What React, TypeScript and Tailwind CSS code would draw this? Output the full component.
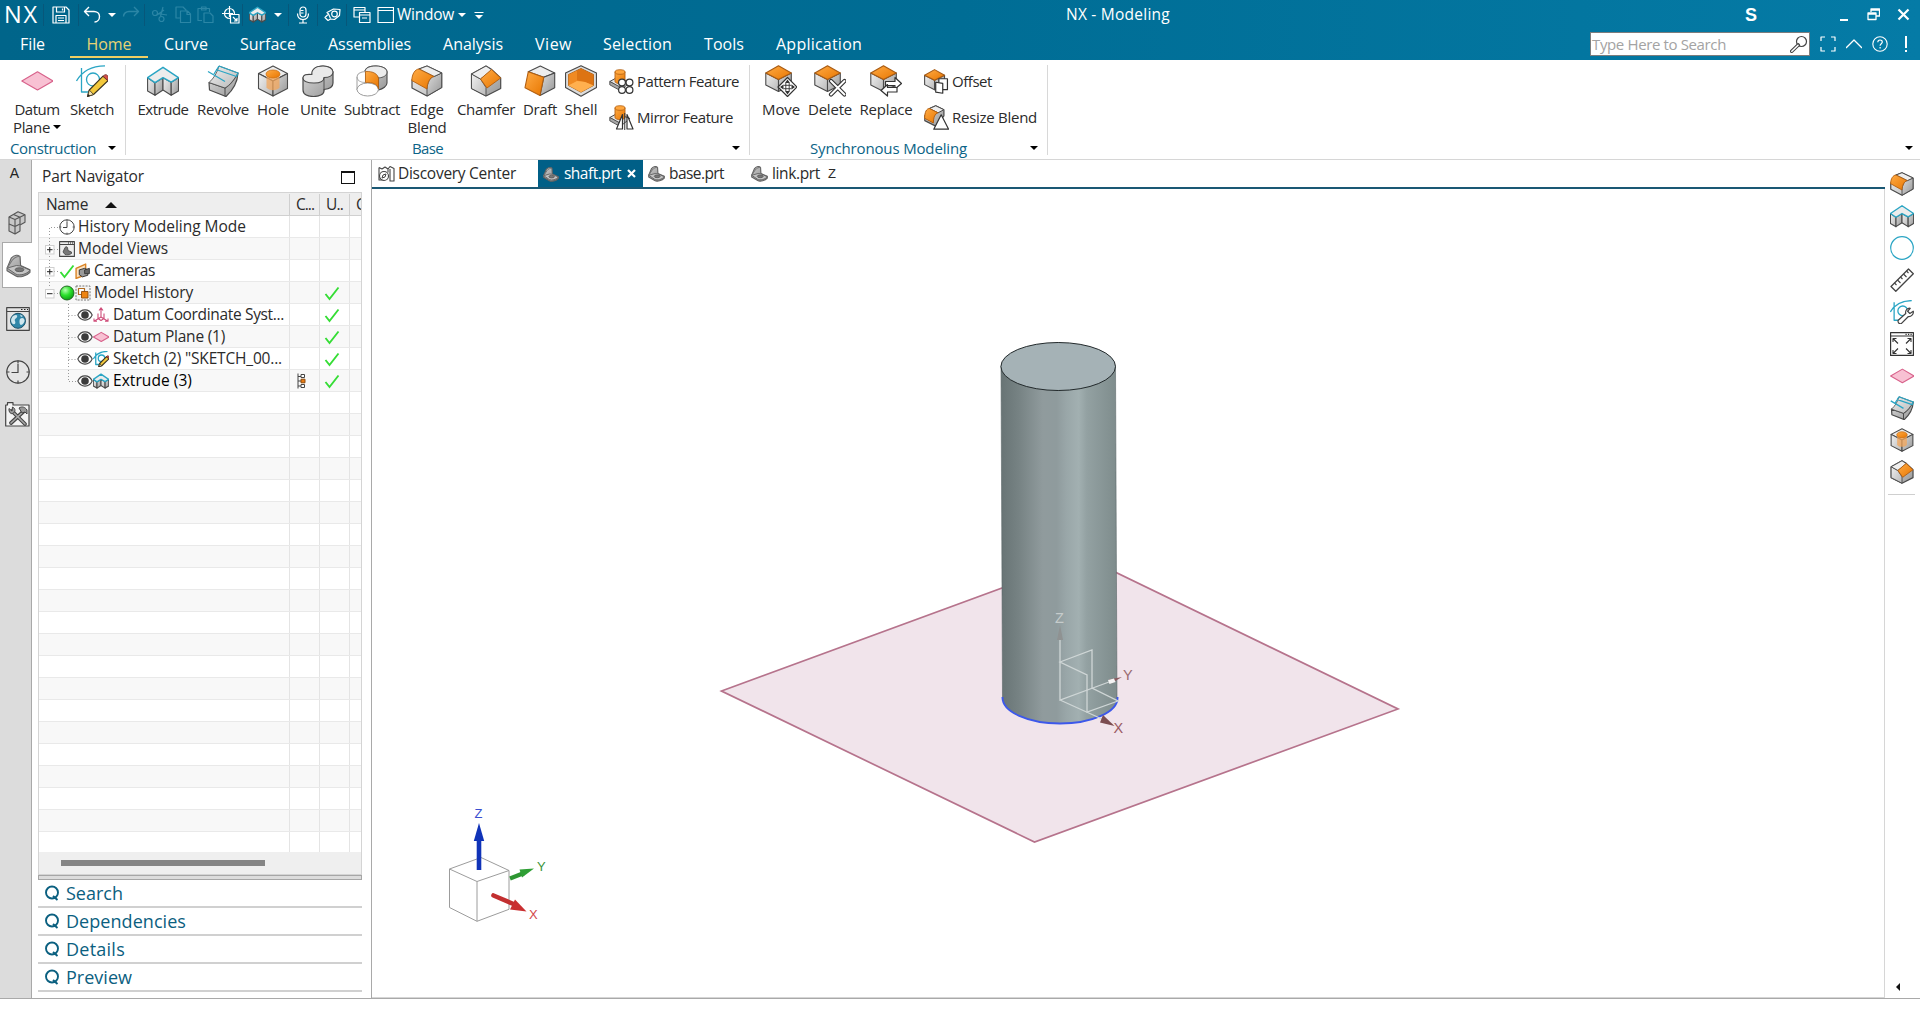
import { useLayoutEffect, useRef, useState, type ReactNode } from "react";
import clsx from "clsx";

/* Text set to a given width: the tracking is worked out from the measured width. */
function Fit({ w, children, className }: { w: number; children: string; className?: string }) {
  const ref = useRef<HTMLSpanElement>(null);
  const [ls, setLs] = useState(0);
  useLayoutEffect(() => {
    const natural = ref.current!.getBoundingClientRect().width;
    setLs((w - natural) / children.length);
  }, [w, children]);
  return (
    <span ref={ref} className={clsx("inline-block whitespace-pre", className)} style={{ letterSpacing: `${ls}px` }}>
      {children}
    </span>
  );
}

/* Icons drawn below their nominal size keep their stroke widths in screen pixels. */
function Svg({ s = 32, vb = 32, children, className }: { s?: number; vb?: number; children: ReactNode; className?: string }) {
  return (
    <svg
      width={s}
      height={s}
      viewBox={`0 0 ${vb} ${vb}`}
      fill="none"
      strokeLinejoin="round"
      className={clsx("shrink-0", s < vb && "[&_*]:[vector-effect:non-scaling-stroke]", className)}
    >
      {children}
    </svg>
  );
}

function Caret({ className }: { className?: string }) {
  return (
    <svg width="8" height="4" viewBox="0 0 8 4" className={clsx("shrink-0", className)}>
      <path d="M0 0h8L4 4z" fill="currentColor" />
    </svg>
  );
}

function Defs() {
  return (
    <svg width="0" height="0" className="absolute">
      <defs>
        <linearGradient id="gSide" x1="0" y1="0" x2="1" y2="1">
          <stop offset="0" stopColor="#f0f0f0" />
          <stop offset="1" stopColor="#b9b9b9" />
        </linearGradient>
        <linearGradient id="gDark" x1="0" y1="0" x2="1" y2="1">
          <stop offset="0" stopColor="#dcdcdc" />
          <stop offset="1" stopColor="#969696" />
        </linearGradient>
        <linearGradient id="gOr" x1="0" y1="0" x2="1" y2="1">
          <stop offset="0" stopColor="#ffab45" />
          <stop offset="1" stopColor="#e87600" />
        </linearGradient>
        <linearGradient id="gPart" x1="0" y1="0" x2="1" y2="1">
          <stop offset="0" stopColor="#c9c9c9" />
          <stop offset="1" stopColor="#888888" />
        </linearGradient>
        <radialGradient id="gBall" cx="0.38" cy="0.3" r="0.75">
          <stop offset="0" stopColor="#b6ffb0" />
          <stop offset="0.5" stopColor="#2be02b" />
          <stop offset="1" stopColor="#0c9a12" />
        </radialGradient>
      </defs>
    </svg>
  );
}

const INK = "#4a4a4a";
const CY = "#2aa5c4";

type IP = { s?: number; className?: string };

function HexBase() {
  return (
    <g stroke={INK} strokeWidth="1.1">
      <path d="M16 1 30.500 8.500 16 16 1.500 8.500z" fill="#ececec" />
      <path d="M1.500 8.500 16 16v15L1.500 23.500z" fill="url(#gSide)" />
      <path d="M30.500 8.500 16 16v15l14.500-7.500z" fill="url(#gDark)" />
    </g>
  );
}

const DatumPlaneIcon = ({ s, className }: IP) => (
  <Svg s={s} className={className}>
    <path d="M.8 16 16.500 6.800 32 16 16.500 25z" fill="#f8c1d3" stroke="#d8628b" strokeWidth="1.100" />
  </Svg>
);
const SketchBase = () => (
  <g stroke={CY} strokeWidth="1.3">
    <path d="M5.500 3v24h11M.5 16C6 6 16 1 29 .8" />
    <circle cx="17" cy="14.500" r="6.500" />
  </g>
);
const SketchIcon = ({ s, className }: IP) => (
  <Svg s={s} className={className}>
    <SketchBase />
    <path d="m11.500 31.500 1.800-6.500L27 11.200l5 4.500-14.500 13.800z" fill="#f2c83c" stroke="#3a3320" strokeWidth="1.1" />
    <path d="m27 11.200 2-1.500c2-.5 4 1.800 3.200 3.700L32 15.700z" fill="#d4504a" stroke="#70302c" strokeWidth=".8" />
    <path d="m13.300 25 4.200 4.500-6 2z" fill="#f7e3b0" stroke="#3a3320" strokeWidth=".8" />
    <path d="m11.500 31.500.8-2.600 1.700 1.800z" fill="#222" />
  </Svg>
);
const ExtrudeIcon = ({ s, className }: IP) => (
  <Svg s={s} className={className}>
    <g stroke={INK} strokeWidth="1.100">
      <path d="M.6 12.700 8 17.700v12.500L.6 26z" fill="url(#gSide)" />
      <path d="m8 17.700 8-5V25l-8 5.200z" fill="url(#gDark)" />
      <path d="m16 12.700 8.200 4.500v13L16 25z" fill="url(#gSide)" />
      <path d="m24.200 17.200 7.300-4.500V26l-7.300 4.200z" fill="url(#gDark)" />
    </g>
    <path d="M.6 12.700 16 2.300l15.500 10.400-7.300 4.500-8.200-4.500-8 5z" fill="#ececec" stroke={CY} strokeWidth="1.400" />
  </Svg>
);
const RevolveIcon = ({ s, className }: IP) => (
  <Svg s={s} className={className}>
    <path d="M2 17.500 18 23c5-3 9-8 13-15-.5 9-6 18-12 23.500L2.500 25z" fill="url(#gDark)" stroke={INK} strokeWidth="1.200" />
    <path d="M12 1 31 8c-4 7-8 12-13 15L2 17.500C7 13 10 8 12 1z" fill="url(#gSide)" stroke={INK} strokeWidth=".8" />
    <path d="M18 23v8.500" stroke={INK} />
    <path d="M12 1 31 8l-1.500 3.500L9 4.500M1 6.500l17 10M12 1 7 9" stroke={CY} strokeWidth="1.300" />
  </Svg>
);
const HoleIcon = ({ s, className }: IP) => (
  <Svg s={s} className={className}>
    <HexBase />
    <path d="M9.500 9v13.500c2.500 3.500 10.500 3.500 13 0V9z" fill="#f3a55a" opacity=".75" />
    <ellipse cx="16" cy="9" rx="7" ry="4" fill="url(#gOr)" stroke="#c96a0c" strokeWidth=".7" />
  </Svg>
);
const UniteIcon = ({ s, className }: IP) => (
  <Svg s={s} className={className}>
    <path d="M10 10c0-5 3-9 11-9 6 0 10 2.500 10 6v11c0 4-4 6-9 6.500v1.500c0 3.500-5 5.500-10.500 5.500S1 29.500 1 25V13c0-2 4-4 9-3z" fill="url(#gDark)" stroke={INK} strokeWidth="1.200" />
    <path d="M10 9.500C9 5 13 1 21 1c6 0 10 2.500 10 6s-4 5.500-9 5.500c0 3.500-4 5.500-10 5.500S1 16.500 1 13s4-4 9-3.500z" fill="#e9e9e9" stroke={INK} strokeWidth="1.100" />
    <path d="M22 12.500v13" stroke={INK} strokeWidth=".9" />
  </Svg>
);
const SubtractIcon = ({ s, className }: IP) => (
  <Svg s={s} className={className}>
    <path d="M9 6c1-3.500 5-5 11-5s11 2.500 11 6v11c0 3-4 6-8.500 7V14C21 10 16 8 9 9z" fill="url(#gDark)" stroke={INK} strokeWidth="1.100" />
    <path d="M9 6c1-3.500 5-5 11-5s11 2.500 11 6-3.500 5.500-8.500 6C20 8.500 16 7 9 7.500z" fill="#ececec" stroke={INK} strokeWidth=".9" />
    <path d="M1 12c0-3 3.500-5.500 8.500-5.500v11C4 17.500 1 15 1 12z" fill="#fff" stroke="#a8a8a8" strokeWidth="1.100" />
    <path d="M1 12v13" stroke="#a8a8a8" strokeWidth="1.100" />
    <ellipse cx="11.700" cy="24.500" rx="10.700" ry="6.500" fill="#fff" stroke="#9c9c9c" />
    <path d="M9.500 6.500C17 6 22 9 22.500 13.500V24c-1-5-6-7-13-6.500z" fill="url(#gOr)" stroke="#b35f10" strokeWidth=".8" />
  </Svg>
);
const BlendIcon = ({ s, className }: IP) => (
  <Svg s={s} className={className}>
    <path d="M1 15v8L16 31l14.700-8.500V8L16 1 8 4z" fill="url(#gSide)" stroke={INK} strokeWidth="1.200" />
    <path d="M16 24c.2-6 3-12 7-12.500L30.700 8v14.500L16 31z" fill="url(#gDark)" stroke={INK} strokeWidth=".9" />
    <path d="m8 4 8-3 14.700 7L23 11.500z" fill="#eee" stroke={INK} strokeWidth=".9" />
    <path d="M.8 15.500C1 9 4 4.200 8 4l15 7.500c-4 .5-6.800 6.500-7 12.500z" fill="url(#gOr)" stroke="#b35f10" strokeWidth=".9" />
  </Svg>
);
const ChamferIcon = ({ s, className }: IP) => (
  <Svg s={s} className={className}>
    <path d="M16 1 1.500 9v14.500L16 31l14.700-7.500V13L21 4z" fill="url(#gDark)" stroke={INK} strokeWidth="1.200" />
    <path d="M1.500 9 10.500 14 16 22.500V31L1.500 23.500z" fill="url(#gSide)" stroke={INK} strokeWidth=".9" />
    <path d="M16 1 1.500 9l9 5L22 5z" fill="#efefef" stroke={INK} strokeWidth=".9" />
    <path d="m21.500 4.500 9.200 8.500L17 23l-6.500-9z" fill="url(#gOr)" stroke="#b35f10" strokeWidth=".9" />
  </Svg>
);
const DraftIcon = ({ s, className }: IP) => (
  <Svg s={s} className={className}>
    <path d="m4.300 6.700 12-5.700 14.400 7-11 4.300z" fill="#ededed" stroke={INK} strokeWidth="1.100" />
    <path d="m19.700 12.300 11-4.300v14.700L16 30.500z" fill="url(#gDark)" stroke={INK} strokeWidth="1.100" />
    <path d="m4.300 6.700 15.400 5.600L16 30.500 1 22.700z" fill="url(#gOr)" stroke="#b35f10" strokeWidth="1.100" />
  </Svg>
);
const ShellIcon = ({ s, className }: IP) => (
  <Svg s={s} className={className}>
    <path d="M16 .8 31.500 8v14.500L16 31.200.5 22.500V8z" fill="#dcdcdc" stroke={INK} strokeWidth="1.200" />
    <path d="M16 3.500 28.500 9.500v11L16 27.200 3.500 20.500v-11z" fill="#f59331" stroke="#8d4c0e" strokeWidth=".8" />
    <path d="M12 7v9.500l-8.500 4v-11l8.500-4z" fill="#f08a22" />
    <path d="M12 5.500 16 3.500l12.500 6v11L20 17l-8-1.500z" fill="#dd7413" />
    <path d="m12 16 8 1 8.500 3.500L16 27.200 3.500 20.500z" fill="#ffb04f" />
  </Svg>
);

function SlabCylinder() {
  return (
    <g>
      <path d="M.8 12.500 8 8.500l13 5-8 6.500z" fill="#e2e2e2" stroke={INK} strokeWidth="1" />
      <path d="M.8 12.500v3.300L12 22v-3.500z" fill="#a8a8a8" stroke={INK} strokeWidth=".9" />
      <path d="M6 2.800v10c1.500 2.400 8.500 2.400 10 0v-10z" fill="url(#gOr)" stroke="#b35f10" strokeWidth=".9" />
      <ellipse cx="11" cy="3" rx="5" ry="2.300" fill="#ffa63d" stroke="#b35f10" strokeWidth=".8" />
    </g>
  );
}
const PatternIcon = () => (
  <Svg s={25} vb={25}>
    <SlabCylinder />
    <g fill="#fff" stroke="#333" strokeWidth="1.200">
      <circle cx="13" cy="13.500" r="3.400" />
      <circle cx="20.500" cy="13.500" r="3.400" />
      <circle cx="13" cy="21" r="3.400" />
      <circle cx="20.500" cy="21" r="3.400" />
    </g>
  </Svg>
);
const MirrorIcon = () => (
  <Svg s={25} vb={25}>
    <SlabCylinder />
    <path d="M13.500 9.500v14.500H7.500z M18 9.500v14.500h6z" fill="#fff" stroke="#333" strokeWidth="1.200" />
    <path d="M15.750 8v17" stroke="#333" strokeWidth="1" />
  </Svg>
);
function OrangeTopCube() {
  return (
    <g strokeWidth="1.100">
      <path d="M.8 8 13.500 14.500v12L.8 20z" fill="url(#gSide)" stroke={INK} />
      <path d="M26.300 8 13.500 14.500v12L26.300 20z" fill="url(#gDark)" stroke={INK} />
      <path d="M13.500.8 26.300 8l-12.800 6.500L.8 8z" fill="url(#gOr)" stroke="#a85a12" />
    </g>
  );
}
const MoveIcon = () => (
  <Svg>
    <OrangeTopCube />
    <path d="m22.500 12.500 9.500 9.500-9.500 9.500L13 22z" fill="#fff" stroke="#333" strokeWidth="1.200" />
    <path d="M22.500 14.500 25 18h-5zM22.500 29.500 25 26h-5zM15 22l3.500-2.500v5zM30 22l-3.500-2.500v5z" fill="#333" />
    <path d="M20.800 18v8M24.200 18v8M18.500 20.300h8M18.500 23.700h8" stroke="#333" strokeWidth=".9" />
  </Svg>
);
const DeleteIcon = () => (
  <Svg>
    <OrangeTopCube />
    <path d="m17 16 13.500 13.500M30.500 16 17 29.500" stroke="#333" strokeWidth="4.200" strokeLinecap="round" />
    <path d="m17 16 13.500 13.500M30.500 16 17 29.500" stroke="#fff" strokeWidth="2" strokeLinecap="round" />
  </Svg>
);
const ReplaceIcon = () => (
  <Svg>
    <OrangeTopCube />
    <path d="M15.500 16.500H25V12.500l6.500 6-6.500 5.500v-3.500h-9.500z" fill="#fff" stroke="#333" strokeWidth="1.200" />
    <path d="M27 22.500h-9.500V19.500l-6.500 6 6.500 5.500v-4H27z" fill="#fff" stroke="#333" strokeWidth="1.200" />
  </Svg>
);
const OffsetIcon = () => (
  <Svg s={25} vb={32}>
    <OrangeTopCube />
    <path d="M19 12.500h11v14H19z" fill="#fff" stroke="#333" strokeWidth="1.200" />
    <path d="m15 17 9 1.500V31l-9-1.500z" fill="#fff" stroke="#333" strokeWidth="1.200" />
  </Svg>
);
const ResizeBlendIcon = () => (
  <Svg s={25} vb={32}>
    <path d="M7 4.500 15 1l10.500 5v8L15 27 1 20v-6z" fill="url(#gDark)" stroke={INK} strokeWidth="1.200" />
    <path d="M7 4.500 15 1l10.500 5L18 10z" fill="#eee" stroke={INK} />
    <path d="M.8 17C1 9 3 4.700 7 4.500L18 10c-4 1-6 6-6 13z" fill="url(#gOr)" stroke="#b35f10" />
    <path d="m22 12.500 9.500 18.500h-19z" fill="#fff" stroke="#333" strokeWidth="1.200" />
  </Svg>
);

/* Bracket with a hole: the part symbol */
const PartIcon = ({ s = 16, className }: IP) => (
  <Svg s={s} vb={24} className={className}>
    <path d="M1 14.500 5 5c3-3.500 7-3.500 8.500-1.500l.5 8.500 9 4v2.500C20 22 13 24 9.500 22L1 17z" fill="url(#gPart)" stroke="#626262" strokeWidth="1.100" />
    <path d="M1 14.500 10 12l4 .5 9 4c-3 4-10 5.500-13.500 3.800z" fill="#c4c4c4" stroke="#626262" strokeWidth=".9" />
    <path d="M1 14.500 6 7c2-2.500 5-4 7.500-3.500" stroke="#777" />
    <ellipse cx="13" cy="16" rx="4.200" ry="1.900" fill="#777" stroke="#555" strokeWidth=".8" />
  </Svg>
);

/* ---------- top bar ---------- */

const Sep = () => <div className="h-[22px] w-px shrink-0 bg-[#07577a]" />;
function Slot({ w, children, dim }: { w: number | string; children: ReactNode; dim?: boolean }) {
  return <div className={clsx("flex h-full shrink-0 items-center justify-center", w, dim && "text-[#2b86a6]")}>{children}</div>;
}

function QuickAccess() {
  const L = { stroke: "currentColor", strokeWidth: 1.2 };
  return (
    <div className="flex h-full items-center">
      <Slot w="w-[43px]"><Fit w={35} className="text-[23.500px] leading-[29px]">NX</Fit></Slot>
      <Sep />
      <Slot w="w-[34px]">
        <Svg s={18} vb={18}><g {...L}><path d="M1 1h13l3 3v13H1z" /><path d="M4.500 1v5h8V1M4 17v-7.500h10V17M6 12h6M6 14.500h6M10.500 2.500v2" /></g></Svg>
      </Slot>
      <Sep />
      <Slot w="w-[26px]">
        <Svg s={18} vb={18}><path d="M6 1 1.500 5.500 6 10M1.500 5.500H11c3 0 5.500 2 5.500 5s-2 5.500-5 5.500" {...L} strokeWidth={1.400} /></Svg>
      </Slot>
      <Slot w="w-[13px]"><Caret /></Slot>
      <Slot w="w-[26px]" dim>
        <Svg s={18} vb={18}><path d="m12 1 4.500 4.500L12 10M16.500 5.500H7C4 5.500 1.500 7.500 1.500 10.500" {...L} strokeWidth={1.400} /></Svg>
      </Slot>
      <Sep />
      <Slot w="w-[29px]" dim>
        <Svg s={17} vb={17}><g {...L}><circle cx="4" cy="7" r="2.500" /><circle cx="10.500" cy="13" r="2.500" /><path d="M6.500 7.500 16 9M9.500 10.500 12 1M6 9l7-5" /></g></Svg>
      </Slot>
      <Slot w="w-[18px]" dim>
        <Svg s={17} vb={17}><g {...L}><path d="M5 12H1V1h7l3 3v1" /><path d="M5.500 5h7l3 3v8.500h-10zM12 5v3.500h3.500" /></g></Svg>
      </Slot>
      <Slot w="w-[27px]" dim>
        <Svg s={17} vb={17}><g {...L}><path d="M5 14.500H1V2.500h11.500V6M4.500 1h4.500v3H4.500z" /><path d="M7 7h6l3 3v6.500H7z" /></g></Svg>
      </Slot>
      <Slot w="w-[23px]">
        <Svg s={18} vb={18}><g {...L}><circle cx="7.500" cy="7.500" r="5" /><path d="M7.500 0v11M0 7.500h11" /><path d="M8.500 8.500h8.500V17H8.500z" fill="#00668c" /><path d="m11 11 4 4M15 12v3h-3" /></g></Svg>
      </Slot>
      <Sep />
      <Slot w="w-[28px]"><ExtrudeIcon s={17} /></Slot>
      <Slot w="w-[13px]"><Caret /></Slot>
      <div className="w-[4px]" />
      <Sep />
      <Slot w="w-[28px]">
        <Svg s={18} vb={18}><g {...L}><rect x="6" y="1" width="6" height="10" rx="3" /><path d="M3.500 7.500c0 4 2 6 5.500 6s5.500-2 5.500-6M9 13.500V17M5 17h8M6.500 4.500h3M6.500 7h3" /></g></Svg>
      </Slot>
      <Sep />
      <Slot w="w-[28px]">
        <Svg s={17} vb={17}><g {...L}><path d="M1 11.500 4.500 8 3 6.500 9.500 3l6.500.5-.5 6-5 4-4-.5-2.500 1.500z" /><circle cx="10.500" cy="8" r="2.800" /><path d="m4.500 8 2 4.500" /></g></Svg>
      </Slot>
      <Sep />
      <Slot w="w-[29px]">
        <Svg s={18} vb={18}><g {...L}><path d="M7 11H1V1.500h11V6M1 4h11" /><path d="M6.500 6.500h10.500v10H6.500zM6.500 9h10.500M9 12h5" /></g></Svg>
      </Slot>
      <Slot w="w-[18px]">
        <Svg s={17} vb={17}><path d="M1 1.500h15.500v15H1zM1 4.500h15.500" {...L} /></Svg>
      </Slot>
      <Fit w={57} className="ml-[3px] text-[15.500px] leading-none">Window</Fit>
      <Caret className="ml-1" />
      <Svg s={10} vb={10} className="ml-2"><path d="M.5 2.500h9" stroke="#fff" /><path d="M1 5h8L5 9z" fill="#fff" /></Svg>
    </div>
  );
}

const MENU: [string, number, string][] = [
  ["File", 25, "ml-[20px]"],
  ["Home", 45, ""],
  ["Curve", 44, "ml-[16px]"],
  ["Surface", 56, "ml-[32px]"],
  ["Assemblies", 83, "ml-[32px]"],
  ["Analysis", 60, "ml-[32px]"],
  ["View", 37, "ml-[32px]"],
  ["Selection", 69, "ml-[31px]"],
  ["Tools", 40, "ml-[32px]"],
  ["Application", 86, "ml-[32px]"],
];

function TopBar() {
  return (
    <header className="flex h-[60px] shrink-0 flex-col bg-linear-to-r from-[#00658a] via-[#006d95] to-[#057ba6] text-white">
      <div className="flex h-[29px] items-center justify-between">
        <div className="flex h-full w-[1066px] items-center"><QuickAccess /></div>
        <Fit w={104} className="text-[15.500px] leading-none">NX - Modeling</Fit>
        <div className="flex flex-1 items-center justify-end pr-[10px]">
          <span className="mr-[83px] font-[Liberation_Sans] text-[18px] leading-none font-bold">S</span>
          <div className="mt-[11px] mr-[19px] h-[2px] w-[8px] bg-white" />
          <Svg s={13} vb={13} className="mr-[17px]"><path d="M4 4V1h8.500v7H9M1 5h8v6.500H1zM4 2h8.500M1 6h8" stroke="#fff" strokeWidth="1.300" /></Svg>
          <Svg s={13} vb={13}><path d="m1.500 1.500 10 10M11.500 1.500l-10 10" stroke="#fff" strokeWidth="2.200" /></Svg>
        </div>
      </div>
      <nav className="flex h-[31px] items-start">
        {MENU.map(([t, w, m]) =>
          t === "Home" ? (
            <div key={t} className="ml-[25px] flex h-[29px] w-[78px] flex-col items-center justify-start border-b-2 border-[#efcf63] pt-[3px] text-[#e8d374]">
              <Fit w={w} className="text-[16px] leading-[24px]">{t}</Fit>
            </div>
          ) : (
            <div key={t} className={clsx("pt-[3px]", m)}>
              <Fit w={w} className="text-[16px] leading-[24px]">{t}</Fit>
            </div>
          ),
        )}
        <div className="ml-auto flex h-[29px] items-center pt-[1px] pr-[13px]">
          <div className="flex h-[24px] w-[220px] items-center justify-between border border-[#7d7d7d] bg-white pr-[1px] pl-px text-[#a3a3a3]">
            <Fit w={134} className="text-[15px] leading-none">Type Here to Search</Fit>
            <Svg s={18} vb={18}><circle cx="11.500" cy="6.500" r="5" stroke="#444" strokeWidth="1.200" /><path d="m8.200 10-6.500 6.200" stroke="#444" strokeWidth="3.600" strokeLinecap="round" /><path d="m8 10.200-6.200 6" stroke="#fff" strokeWidth="1.500" strokeLinecap="round" /></Svg>
          </div>
          <Svg s={16} vb={16} className="ml-[10px]"><path d="M1 5V1h4M11 1h4v4M15 11v4h-4M5 15H1v-4" stroke="#fff" strokeWidth="1.200" /></Svg>
          <Svg s={16} vb={16} className="ml-[10px]"><path d="m0 12 8-8 8 8" stroke="#fff" strokeWidth="1.300" /></Svg>
          <Svg s={16} vb={16} className="ml-[10px]"><circle cx="8" cy="8" r="7.200" stroke="#fff" strokeWidth="1.100" /><path d="M5.800 6.300c0-3 4.500-3 4.500-.3 0 1.700-2.200 1.700-2.200 3.800M8.100 11v1.400" stroke="#fff" strokeWidth="1.200" /></Svg>
          <div className="ml-[17px] flex flex-col items-center gap-[2px]"><div className="h-[12px] w-[2px] bg-white" /><div className="size-[2px] bg-white" /></div>
        </div>
      </nav>
    </header>
  );
}

/* ---------- ribbon ---------- */

function BigButton({ icon, lines, box }: { icon: ReactNode; lines: [string, number][]; box: string }) {
  return (
    <div className={clsx("flex shrink-0 flex-col items-center pt-[5px]", box)}>
      {icon}
      <div className="mt-[3px] flex flex-col items-center text-[15px] leading-[18px] text-[#2b2b2b]">
        {lines.map(([t, w]) => (
          <span key={t} className="flex items-center">
            <Fit w={w}>{t}</Fit>
            {t === "Plane" && <Caret className="ml-[3px] text-black" />}
          </span>
        ))}
      </div>
    </div>
  );
}

function SmallButton({ icon, text, w }: { icon: ReactNode; text: string; w: number }) {
  return (
    <div className="flex h-[36px] items-center gap-[3px] text-[#2b2b2b]">
      {icon}
      <Fit w={w} className="text-[15px] leading-none">{text}</Fit>
    </div>
  );
}

function Group({ box, children, label, lw, labelPad }: { box: string; children: ReactNode; label: string; lw: number; labelPad: string }) {
  return (
    <section className={clsx("flex h-full shrink-0 flex-col", box)}>
      <div className="flex h-[78px]">{children}</div>
      <div className={clsx("flex h-[20px] items-center justify-between pr-[9px] text-[#0b6487]", labelPad)}>
        <Fit w={lw} className="text-[15px] leading-none">{label}</Fit>
        <Caret className="text-black" />
      </div>
    </section>
  );
}

const RibbonLine = () => <div className="mt-[5px] h-[90px] w-px shrink-0 bg-[#d8d8d8]" />;

function Ribbon() {
  return (
    <div className="flex h-[100px] shrink-0 border-b border-[#d6d6d6] bg-white">
      <Group box="w-[125px]" label="Construction" lw={86} labelPad="pl-[10px]">
        <BigButton icon={<DatumPlaneIcon />} lines={[["Datum", 45], ["Plane", 37]]} box="w-[74px]" />
        <BigButton icon={<SketchIcon />} lines={[["Sketch", 44]]} box="w-[36px]" />
      </Group>
      <RibbonLine />
      <Group box="w-[623px]" label="Base" lw={31} labelPad="pl-[286px]">
        <BigButton icon={<ExtrudeIcon />} lines={[["Extrude", 51]]} box="w-[74px]" />
        <BigButton icon={<RevolveIcon />} lines={[["Revolve", 52]]} box="w-[46px]" />
        <BigButton icon={<HoleIcon />} lines={[["Hole", 32]]} box="w-[54px]" />
        <BigButton icon={<UniteIcon />} lines={[["Unite", 36]]} box="w-[36px]" />
        <BigButton icon={<SubtractIcon />} lines={[["Subtract", 56]]} box="w-[72px]" />
        <BigButton icon={<BlendIcon />} lines={[["Edge", 34], ["Blend", 39]]} box="w-[38px]" />
        <BigButton icon={<ChamferIcon />} lines={[["Chamfer", 58]]} box="w-[80px]" />
        <BigButton icon={<DraftIcon />} lines={[["Draft", 34]]} box="w-[28px]" />
        <BigButton icon={<ShellIcon />} lines={[["Shell", 33]]} box="w-[54px]" />
        <div className="ml-[1px] flex flex-col pt-[3px]">
          <SmallButton icon={<PatternIcon />} text="Pattern Feature" w={102} />
          <SmallButton icon={<MirrorIcon />} text="Mirror Feature" w={96} />
        </div>
      </Group>
      <RibbonLine />
      <Group box="w-[297px]" label="Synchronous Modeling" lw={157} labelPad="pl-[60px]">
        <BigButton icon={<MoveIcon />} lines={[["Move", 38]]} box="w-[62px]" />
        <BigButton icon={<DeleteIcon />} lines={[["Delete", 44]]} box="w-[36px]" />
        <BigButton icon={<ReplaceIcon />} lines={[["Replace", 53]]} box="w-[76px]" />
        <div className="flex flex-col pt-[3px]">
          <SmallButton icon={<OffsetIcon />} text="Offset" w={40} />
          <SmallButton icon={<ResizeBlendIcon />} text="Resize Blend" w={85} />
        </div>
      </Group>
      <RibbonLine />
      <div className="flex flex-1 items-end justify-end pr-[7px] pb-[9px]"><Caret /></div>
    </div>
  );
}

/* ---------- resource bar ---------- */

function ResourceBar() {
  return (
    <aside className="flex w-[32px] shrink-0 flex-col items-center border-r border-[#a9a9a9] bg-[#dcdcdc]">
      <span className="mt-[6px] mr-[2px] font-[Liberation_Sans] text-[14px] leading-[14px] text-[#222]">A</span>
      <Svg s={24} vb={24} className="mt-[31px] ml-[4px]">
        <g stroke="#555" strokeWidth="1.100">
          <path d="M3 6 12 .8l7 3v7.500L14 14v6l-5 3-6-3z" fill="#c8c8c8" />
          <path d="m3 6 6 2.500L19 3.800M9 8.500V23M3 13l6 2.500 5-2.500M7.500 3.500 14 6.200v7" />
        </g>
      </Svg>
      <div className="mt-[7px] ml-[2px] flex h-[46px] w-[30px] items-center border-y border-l border-[#a9a9a9] bg-white pl-[3px]">
        <PartIcon s={25} />
      </div>
      <Svg s={24} vb={24} className="mt-[19px] ml-[5px]">
        <path d="M.7.700h22.600v22.600H.7zM.7 4.500h22.600" fill="#e4e4e4" stroke="#444" strokeWidth="1.200" />
        <path d="M15 2.500h1.500M18 2.500h1.500M21 2.500h1" stroke="#222" />
        <circle cx="12" cy="13.800" r="7.500" fill="#2f86a8" stroke="#1c5068" />
        <path d="M7 9c3-2 5-1 4 1s-3 2-2 4 0 4-2 3-3-5 0-8zM14 12c2-2 4-1 4.500 1s-2 5-3.500 5-2-4-1-6zM14 7.500l3 1.500-2 1z" fill="#cfe6ee" />
      </Svg>
      <Svg s={24} vb={24} className="mt-[29px] ml-[4px]">
        <circle cx="12" cy="12" r="11.200" fill="#e4e4e4" stroke="#444" strokeWidth="1.200" />
        <path d="M12 4v8.500H5.500M12 .5v3M12 20.500v3M.5 12h3M20.500 12h3" stroke="#444" strokeWidth="1.200" />
      </Svg>
      <Svg s={25} vb={25} className="mt-[18px] ml-[4px]">
        <path d="M.7 24V3h1.800V.7h5.500V3h16v21z" fill="#f4f4f4" stroke="#444" strokeWidth="1.200" />
        <path d="m7 9 13 13M19 9 6 21" stroke="#444" strokeWidth="3.800" strokeLinecap="round" />
        <path d="m7 9 13 13M19 9 6 21" stroke="#aaa" strokeWidth="1.600" strokeLinecap="round" />
        <path d="M4 6.500 7 9l.5-4C10 6 11 9 8.500 11S3.500 10 4 6.500zM14 6c3-2 6-1 8 2v4l-2-2-3 1z" fill="#999" stroke="#444" />
      </Svg>
    </aside>
  );
}

/* ---------- part navigator ---------- */

const Check = () => (
  <Svg s={16} vb={16}><path d="m1.500 9 4 5L14.500 2.500" stroke="#35dd35" strokeWidth="1.900" strokeLinejoin="miter" /></Svg>
);
const Eye = () => (
  <Svg s={16} vb={16}>
    <path d="M.8 8C4 1.200 12 1.200 15.200 8 12 14.800 4 14.800.8 8z" fill="#fff" stroke="#444" strokeWidth="1.100" />
    <circle cx="8" cy="8" r="3.800" fill="#3b3b3b" />
  </Svg>
);

type Branch = "first" | "plus" | "minus" | "child" | "last";
function TreeGutter({ kind }: { kind: Branch }) {
  const dots = { stroke: "#9a9a9a", strokeDasharray: "1 2" };
  if (kind === "child" || kind === "last") {
    return (
      <svg width="38" height="22" viewBox="0 0 38 22" className="shrink-0">
        <path d={kind === "last" ? "M29.500 0v11.500h8" : "M29.500 0v22M29.500 11.500h8"} fill="none" {...dots} />
      </svg>
    );
  }
  return (
    <svg width="20" height="22" viewBox="0 0 20 22" className="shrink-0">
      <path d={kind === "first" ? "M10.500 22V11.500H19" : kind === "minus" ? "M10.500 0v6M15 11.500h5" : "M10.500 0v22M15 11.500h5"} fill="none" {...dots} />
      {kind !== "first" && (
        <>
          <rect x="6.500" y="7.500" width="8.500" height="8.500" fill="#fff" stroke="#cfcfcf" />
          <path d={kind === "plus" ? "M8 11.700h5.500M10.750 9v5.500" : "M8 11.700h5.500"} stroke="#222" />
        </>
      )}
    </svg>
  );
}

type Row = { kind: Branch; icons: ReactNode; text: string; w: number; strong?: boolean; up?: boolean; badge?: boolean };
const ROWS: Row[] = [
  {
    kind: "first", text: "History Modeling Mode", w: 168,
    icons: <Svg s={16} vb={16}><circle cx="8" cy="8" r="7.200" stroke="#444" fill="#fff" /><path d="M8 2.500V8.500H4M8 .8v1.500M8 13.700v1.500M.8 8h1.500M13.700 8h1.500" stroke="#444" /></Svg>,
  },
  {
    kind: "plus", text: "Model Views", w: 90,
    icons: <Svg s={16} vb={16}><path d="M.6.600h14.800v14.800H.6zM.6 3.500h14.800" stroke="#444" fill="#eee" strokeWidth="1.100" /><path d="M9 2h1M11 2h1M13 2h1" stroke="#222" /><path d="M4 11 6 6.500c1-1 2-1 2.500 0l.5 3 3.500 1.500v1.500c-2 1.500-5 1.500-6.500 1z" fill="#777" stroke="#444" strokeWidth=".8" /></Svg>,
  },
  {
    kind: "plus", text: "Cameras", w: 61,
    icons: <><Check /><Svg s={16} vb={15}><path d="M1 5 10 1v10l-9 3.500z" fill="#fbe0bf" stroke="#d98324" strokeWidth="1.300" /><path d="M4 6.500 9 5l3 1.500v5L7 13l-3-2z" fill="#9a9a9a" stroke="#333" strokeWidth=".9" /><path d="M9 6.500 13.500 5v5L9 10z" fill="#666" stroke="#333" strokeWidth=".8" /></Svg></>,
  },
  {
    kind: "minus", text: "Model History", w: 99, up: true,
    icons: <><Svg s={16} vb={16}><circle cx="8" cy="8" r="7" fill="url(#gBall)" stroke="#1c5a1c" strokeWidth=".9" /></Svg><Svg s={16} vb={16}><path d="M1 1h14v14H1z" fill="#f4f4f4" stroke="#777" strokeDasharray="2 1.200" /><path d="M3.500 3.500h6v6h-6z" fill="#fff" stroke="#b06a20" strokeWidth="1.200" /><path d="M6.500 6.500h6.500v6.500H6.500z" fill="#ee8412" stroke="#8d4c0e" strokeWidth=".9" /></Svg></>,
  },
  {
    kind: "child", text: "Datum Coordinate Syst...", w: 171, up: true,
    icons: <><Eye /><Svg s={16} vb={16}><path d="M8 1v9L1.500 14M8 10l6.500 4M6 3.500 8 .8l2 2.700M1 11.500v2.800h3M15 11.500v2.800h-3M5 6.500v5M11 6.500v5M5 11.500l3 2 3-2" stroke="#cf4d79" strokeWidth="1.100" /></Svg></>,
  },
  { kind: "child", text: "Datum Plane (1)", w: 112, up: true, icons: <><Eye /><DatumPlaneIcon s={16} /></> },
  { kind: "child", text: 'Sketch (2) "SKETCH_00...', w: 169, up: true, icons: <><Eye /><SketchIcon s={16} /></> },
  { kind: "last", text: "Extrude (3)", w: 79, strong: true, up: true, badge: true, icons: <><Eye /><ExtrudeIcon s={16} /></> },
];

function NavRow({ row, alt }: { row?: Row; alt: boolean }) {
  return (
    <div className={clsx("flex h-[22px] shrink-0 border-b border-[#e9e9e9]", alt ? "bg-[#f8f8f8]" : "bg-white")}>
      <div className="flex w-[251px] shrink-0 items-center overflow-hidden border-r border-[#e4e4e4]">
        {row && (
          <>
            <TreeGutter kind={row.kind} />
            <span className="flex items-center">{row.icons}</span>
            <Fit w={row.w} className={clsx("text-[15.500px] leading-none", row.kind === "child" || row.kind === "last" ? "ml-[4px]" : "ml-[3px]", row.strong ? "font-medium text-black" : "text-[#2b2b2b]")}>
              {row.text}
            </Fit>
          </>
        )}
      </div>
      <div className="flex w-[30px] shrink-0 items-center border-r border-[#e4e4e4] pl-[7px]">
        {row?.badge && (
          <svg width="9" height="16" viewBox="0 0 9 16" fill="none" className="shrink-0"><path d="M1 .5v15M1 3.500h3M1 8h3M1 13h3" stroke="#444" /><path d="M4 1.500h3.500v3H4zM4 11.500h3.500v3H4z" fill="#fff" stroke="#444" /><path d="M4 6.200h4v3.600H4z" fill="#e87b14" stroke="#8d4c0e" /></svg>
        )}
      </div>
      <div className="flex w-[30px] shrink-0 items-center border-r border-[#e4e4e4] pl-[4px]">{row?.up && <Check />}</div>
      <div className="flex-1" />
    </div>
  );
}

function NavHeader() {
  return (
    <div className="flex h-[23px] shrink-0 border-b border-[#d0d0d0] bg-[#eeeeee] pt-px text-[15.500px] leading-none text-[#2b2b2b]">
      <div className="flex w-[251px] shrink-0 items-center border-r border-[#cfcfcf] pl-[7px]">
        <Fit w={42}>Name</Fit>
        <svg width="12" height="6" viewBox="0 0 12 6" className="ml-[17px]"><path d="M6 0l6 6H0z" fill="#111" /></svg>
      </div>
      <div className="flex w-[30px] shrink-0 items-center border-r border-[#cfcfcf] pl-[6px]"><Fit w={18}>C...</Fit></div>
      <div className="flex w-[30px] shrink-0 items-center border-r border-[#cfcfcf] pl-[6px]"><Fit w={17}>U..</Fit></div>
      <div className="flex flex-1 items-center overflow-hidden pl-[6px]">C</div>
    </div>
  );
}

const SECTIONS: [string, number][] = [["Search", 57], ["Dependencies", 120], ["Details", 59], ["Preview", 66]];

function Navigator() {
  return (
    <aside className="flex w-[340px] shrink-0 flex-col border-r border-[#a9a9a9] bg-white pr-[9px] pl-[6px]">
      <div className="flex h-[32px] items-center justify-between pt-[2px] pr-[7px] pl-[4px]">
        <Fit w={102} className="text-[15.500px] leading-none text-[#2b2b2b]">Part Navigator</Fit>
        <div className="h-[13px] w-[14px] border border-t-2 border-[#111]" />
      </div>
      <div className="flex h-[683px] flex-col border border-[#d4d4d4]">
        <NavHeader />
        <div className="flex flex-1 flex-col overflow-hidden">
          {Array.from({ length: 29 }, (_, i) => <NavRow key={i} row={ROWS[i]} alt={i % 2 === 1} />)}
        </div>
        <div className="flex h-[22px] shrink-0 items-center bg-[#efefef] pb-[1px] pl-[22px]">
          <div className="h-[6px] w-[204px] bg-[#858585]" />
        </div>
      </div>
      <div className="h-[5px] border border-[#a6a6a6] bg-[#dcdcdc]" />
      {SECTIONS.map(([t, w]) => (
        <div key={t} className="flex h-[28px] items-center border-b-2 border-[#d0d0d0] pl-[6px] text-[#0b6080]">
          <Svg s={16} vb={16}><circle cx="8" cy="7.500" r="6" stroke="currentColor" strokeWidth="1.900" /><path d="m9 11 4.500 4" stroke="currentColor" strokeWidth="1.900" /></Svg>
          <Fit w={w} className="ml-[6px] text-[18px] leading-none">{t}</Fit>
        </div>
      ))}
    </aside>
  );
}

/* ---------- work area ---------- */

function Tabs() {
  return (
    <div className="flex h-[29px] shrink-0 border-b-2 border-[#1a5874] bg-white text-[15.500px] leading-none text-[#2b2b2b]">
      <div className="flex w-[166px] items-center pl-[6px]">
        <Svg s={17} vb={17}><path d="M1 2.500 4 4l3-2 3 2v3.500M1 2.500V15h5M10 4l2-2.500 4 2V16h-4V4" stroke="#444" strokeWidth="1.100" /><circle cx="6" cy="11" r="4.500" fill="#fff" stroke="#444" strokeWidth="1.100" /><path d="m8 9-3 1-1 3 3-1z" stroke="#444" /></Svg>
        <Fit w={118} className="ml-[3px]">Discovery Center</Fit>
      </div>
      <div className="flex w-[105px] items-center bg-[#005f87] pl-[5px] text-white">
        <PartIcon s={16} />
        <Fit w={57} className="ml-[5px]">shaft.prt</Fit>
        <Svg s={9} vb={9} className="ml-[6px]"><path d="m1 1 7 7M8 1 1 8" stroke="#fff" strokeWidth="2.200" /></Svg>
      </div>
      <div className="flex w-[103px] items-center pl-[5px]">
        <PartIcon s={17} />
        <Fit w={55} className="ml-[4px]">base.prt</Fit>
      </div>
      <div className="flex items-center pl-[5px]">
        <PartIcon s={17} />
        <Fit w={48} className="ml-[4px]">link.prt</Fit>
        <span className="ml-[8px] font-[Liberation_Sans] text-[13px]">Z</span>
      </div>
    </div>
  );
}

/* 3D scene; its view box is in window coordinates, starting at (372, 189) */
function Viewport() {
  const wire = { stroke: "#cfd6d6", strokeWidth: 1.3 };
  return (
    <svg width="1512" height="808" viewBox="372 189 1512 808" fill="none" className="block" fontFamily="Liberation Sans, sans-serif" fontWeight="400">
      <defs>
        <linearGradient id="gShaft" gradientUnits="userSpaceOnUse" x1="1001" y1="0" x2="1117" y2="0">
          <stop offset="0" stopColor="#687475" />
          <stop offset="0.15" stopColor="#768283" />
          <stop offset="0.36" stopColor="#909b9d" />
          <stop offset="0.48" stopColor="#8f9b9d" />
          <stop offset="0.56" stopColor="#99a6a8" />
          <stop offset="0.67" stopColor="#a2b0b1" />
          <stop offset="0.74" stopColor="#93a1a2" />
          <stop offset="1" stopColor="#7e8c8c" />
        </linearGradient>
      </defs>
      <path d="M721.500 691 1085 557.500 1398 709 1034.500 842z" fill="#f1e4eb" stroke="#b6738c" strokeWidth="1.700" />
      <path d="M1001 366 1002.500 699c2 14 26 24.500 57.500 24.500s56-10 57-24.500L1115.500 366z" fill="url(#gShaft)" />
      <path d="M1001 366 1002.500 699M1115.500 366l1.500 333" stroke="#5b6768" strokeWidth=".6" />
      <ellipse cx="1058.200" cy="366.500" rx="57.300" ry="24" fill="#a5b2b6" stroke="#22292b" strokeWidth="1" />
      <path d="M1002.500 697c-.5 15 26 26.500 57.500 26.500s58.500-11.500 57.500-26.500" stroke="#3d58ea" strokeWidth="1.900" />
      <g {...wire}>
        <path d="M1060 640v60l49-18M1060 700l42 19" />
        <path d="M1060 662l32-12v38l26 13-31 11v-37z" />
      </g>
      <path d="M1060 625l3 15h-6z" fill="#8f9292" />
      <path d="M1109 679.500 1122 677l-11 6.500z" fill="#8a5a5f" />
      <path d="M1108 680l6-1.500 1.500 3.500-6 2z" fill="#f4f4f4" />
      <path d="M1103 715 1114.500 726l-14.500-3.500z" fill="#7b4c50" />
      <g fontSize="14.500">
        <text x="1055" y="622.500" fill="#c6cccc">Z</text>
        <text x="1123" y="679.500" fill="#9a6a70">Y</text>
        <text x="1113.500" y="732.500" fill="#9a5a62">X</text>
      </g>

      <path d="M481 857.500 449.500 869v38.500l27.500 13.800 32-12V870.500zM449.500 869l27.500 12.500 32-11M477 881.500v39.800" stroke="#9c9c9c" />
      <path d="M479 870v-32" stroke="#1033b8" strokeWidth="4.600" />
      <path d="M479 823l5.200 18h-10.400z" fill="#1033b8" />
      <path d="M510 878.500l14-5.500" stroke="#2d9632" strokeWidth="4.200" />
      <path d="M534 868.500 522 877.500l-2.500-8z" fill="#2f9f35" />
      <path d="M493.500 895.500l20 8.500" stroke="#c22f30" strokeWidth="4.600" strokeLinecap="round" />
      <path d="M526.500 911.500 515 899.500l-5 10z" fill="#c92f31" />
      <g fontSize="13">
        <text x="474.500" y="818" fill="#3a4fd0">Z</text>
        <text x="537" y="870.500" fill="#3c9440">Y</text>
        <text x="529" y="919" fill="#d2474b">X</text>
      </g>
    </svg>
  );
}

function RightBar() {
  const icons: ReactNode[] = [
    <BlendIcon s={24} />,
    <ExtrudeIcon s={24} />,
    <Svg s={24} vb={24}><circle cx="12" cy="12" r="11.300" stroke="#2aa5c4" strokeWidth="1.200" /></Svg>,
    <Svg s={24} vb={24}><path d="M1 18.500 18.500 1 23.300 5.800 5.800 23.300z" stroke="#444" strokeWidth="1.300" fill="#fff" /><path d="m4.500 15 2 2M7.500 12l3 3M10.500 9l2 2M13.500 6l3 3M16.500 3l2 2" stroke="#444" strokeWidth="1.100" /></Svg>,
    <Svg s={24}><SketchBase /><path d="M11 27 21 18c-1-4 2-7.500 6-7l-3.500 4 3 3 4.500-3c1 4-3 7.500-6.500 7L15 31.500c-3 1-5-2-4-4.500z" fill="#fff" stroke="#444" strokeWidth="1.200" /></Svg>,
    <Svg s={24} vb={24}><path d="M.6.600h22.800v22.800H.6zM.6 4h22.800" stroke="#333" strokeWidth="1.200" /><path d="M15.500 2.300h1.200M18 2.300h1.200M20.500 2.300h1.200" stroke="#333" strokeWidth="1.200" /><path d="M3 10V6.500h3.500M3 6.500l5 5M21 10V6.500h-3.500M21 6.500l-5 5M3 18v3.500h3.500M3 21.500l5-5M21 18v3.500h-3.500M21 21.500l-5-5" stroke="#333" strokeWidth="1.100" /></Svg>,
    <DatumPlaneIcon s={24} />,
    <RevolveIcon s={24} />,
    <HoleIcon s={24} />,
    <ChamferIcon s={24} />,
  ];
  return (
    <aside className="flex w-[35px] shrink-0 flex-col items-center bg-white pr-[2px]">
      <div className="flex flex-col gap-[8px] pt-[12px]">
        {icons.map((ic, i) => <div key={i} className="size-[24px]">{ic}</div>)}
      </div>
      <div className="mt-[10px] h-px w-[27px] bg-[#cfcfcf]" />
      <svg width="4" height="8" viewBox="0 0 4 8" className="mt-auto mr-[8px] mb-[7px]"><path d="M4 0v8L0 4z" fill="#111" /></svg>
    </aside>
  );
}

export default function App() {
  return (
    <div className="flex h-[1017px] w-[1920px] flex-col overflow-hidden bg-white font-['Open_Sans','Noto_Sans',sans-serif]">
      <Defs />
      <TopBar />
      <Ribbon />
      <div className="flex h-[839px] shrink-0 border-b border-[#a9a9a9]">
        <ResourceBar />
        <Navigator />
        <main className="flex w-[1513px] flex-col">
          <Tabs />
          <div className="h-[809px] overflow-hidden border-r border-b border-[#d6d6d6]"><Viewport /></div>
        </main>
        <RightBar />
      </div>
    </div>
  );
}
